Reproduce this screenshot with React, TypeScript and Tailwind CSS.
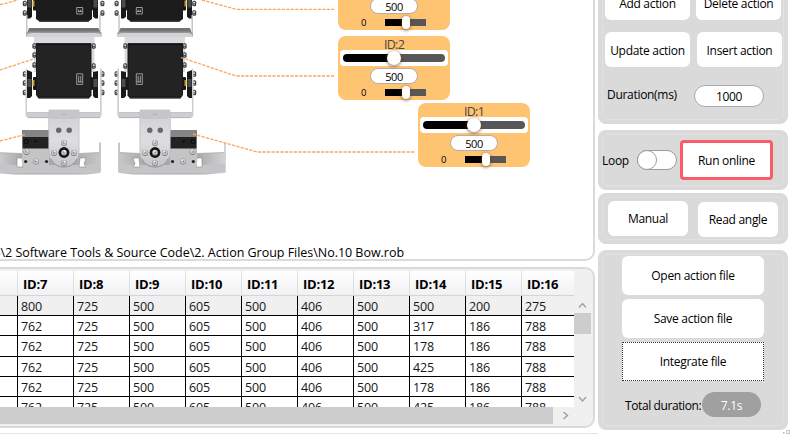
import React from "react";

const columns = [7, 8, 9, 10, 11, 12, 13, 14, 15, 16];

const rows = [
  { h: "h-5", v: [800, 725, 500, 605, 500, 406, 500, 500, 200, 275] },
  { h: "h-5", v: [762, 725, 500, 605, 500, 406, 500, 317, 186, 788] },
  { h: "h-[21px]", v: [762, 725, 500, 605, 500, 406, 500, 178, 186, 788] },
  { h: "h-5", v: [762, 725, 500, 605, 500, 406, 500, 425, 186, 788] },
  { h: "h-5", v: [762, 725, 500, 605, 500, 406, 500, 178, 186, 788] },
  { h: "h-5", v: [762, 725, 500, 605, 500, 406, 500, 425, 186, 788] },
];

function Screw({ x, y, r = 2.6 }: { x: number; y: number; r?: number }) {
  return (
    <g>
      <circle cx={x} cy={y + 0.4} r={r + 0.4} fill="#77797b" />
      <circle cx={x} cy={y} r={r} fill="#c9cacb" />
      <circle cx={x} cy={y} r={r * 0.45} fill="#8d8a84" />
      <circle cx={x - 0.6} cy={y - 0.8} r={0.9} fill="#f4f4f4" />
    </g>
  );
}

function SideScrew({ x, y }: { x: number; y: number }) {
  return (
    <g>
      <rect x={x - 2} y={y - 2.8} width="4" height="5.6" rx="1.6" fill="#3b3b3b" />
      <rect x={x - 1.1} y={y - 1.6} width="2" height="1.5" fill="#dcdcdc" />
      <rect x={x - 0.8} y={y + 0.7} width="1.6" height="1" fill="#a5a5a5" />
    </g>
  );
}

function Horns({ y }: { y: number }) {
  return (
    <g>
      <rect x="126" y={y - 6} width="3" height="13" rx="1" fill="#171717" />
      <path d={`M121 ${y - 12}l5 1v24l-2 2h-3z`} fill="#191919" />
      <rect x="121.5" y={y - 4} width="4" height="8" fill="#4a4b4d" />
      <rect x="182" y={y - 6} width="4" height="13" rx="1" fill="#171717" />
      <rect x="184.5" y={y - 3} width="2" height="6" fill="#c39a32" />
      <path d={`M187 ${y - 11}l5 -2v28h-3l-2 -2z`} fill="#191919" />
      <rect x="187.5" y={y - 4} width="4" height="8" fill="#4a4b4d" />
      {[-9, 0, 9.5].map((d) => (
        <g key={d}>
          <SideScrew x={116.6} y={y + d} />
          <SideScrew x={194.2} y={y + d} />
        </g>
      ))}
    </g>
  );
}

function ServoLabel({ y, h }: { y: number; h: number }) {
  return (
    <g fill="none" stroke="#b6b6b6" strokeWidth="0.8">
      <path d={`M136.3 ${y}h6v${h}h-6z`} />
      <path d={`M138.2 ${y + 2}v${h - 4}M140.3 ${y + 2}v${h - 4}M137 ${y + h - 2.5}h4`} />
    </g>
  );
}

function Leg() {
  return (
    <g>
      <Horns y={3.5} />
      <path d="M127 -4H183V19L179 21.8H131L127 19Z" fill="#1c1c1d" />
      <path d="M130 21.2H180" stroke="#383838" />
      <ServoLabel y={7.5} h={6.5} />

      <path d="M118.3 15H119.8V37H118.3ZM191.5 15H193V37H191.5Z" fill="#c7c7cb" />
      <rect x="124.5" y="36" width="60.5" height="36" fill="#dbdbdf" />
      <path d="M120.5 28H190L192.5 35.5H117.5Z" fill="#747476" />
      <path d="M117.5 32.5L121 31.5H189L192.5 32.5V37H117.5Z" fill="#98989a" />
      <path d="M117.5 34.5Q119 33 123 33H187Q191 33 192.5 35V37H117.5Z" fill="#d3d3d6" />
      {[46, 66].map((y) => (
        <SideScrew key={y} x={125.3} y={y} />
      ))}
      {[46, 55, 65].map((y) => (
        <SideScrew key={y} x={184.6} y={y} />
      ))}

      <Horns y={83} />
      <path d="M127.5 43.5H183V95L180.5 98.5H130L127.5 95.5Z" fill="#1b1b1c" />
      <rect x="129" y="45" width="53" height="51" fill="#232324" />
      <path d="M128 43.8H183" stroke="#070707" />
      <path d="M130 97.8H180" stroke="#343434" />
      <ServoLabel y={73.8} h={10.6} />

      <path d="M117.3 69L119 68V112.5H192V68L193.5 70V114Q193.5 118 190 118H121Q117.3 118 117.3 114Z" fill="#cfcfd3" />
      <path d="M119 112.6H192" stroke="#b9b9bd" strokeWidth="0.8" />
      <path d="M119 117.6H191" stroke="#a9a9ad" strokeWidth="0.7" />

      <path
        d="M118 142L120 143V152.5L140 153.5H197L224 152.5V143L226 142V172Q226 173 224 173L205 174.5H133L119.5 173Q118 173 118 171Z"
        fill="url(#foot)"
      />
      <path d="M119 163.5L133 165H205L225 163.5V172L205 173.5H133L119 172Z" fill="#c5c5c8" />
      <path d="M120 152.5L140 153.5M197 153.5L224 152.5" stroke="#a6a6a9" strokeWidth="0.7" />
      <path d="M133 158H139L140 167H133L135 164ZM197 158H202V167H196Z" fill="#fff" stroke="#8b8b8c" strokeWidth="0.6" />

      <rect x="170" y="130" width="27" height="36" fill="#c4c4c6" />
      <rect x="170" y="130" width="27" height="7.5" fill="#858586" />
      <rect x="170" y="137" width="26.5" height="11.5" fill="#222223" />
      <circle cx="193" cy="141.5" r="2" fill="#292929" stroke="#070707" />
      <circle cx="183.5" cy="141.5" r="1.3" fill="#101010" />
      <Screw x={192.5} y={151.5} />
      <Screw x={183} y={161.2} />
      <circle cx="172.5" cy="161.5" r="1.6" fill="#222" />
      <circle cx="193.3" cy="161.5" r="1.6" fill="#222" />

      <path d="M140 110H170V119H170.3V152A15.2 15.2 0 0 1 139.9 152V119H140Z" fill="url(#plate)" stroke="#b2b2b6" strokeWidth="0.6" />
      <path d="M140.3 110.3H170V117L167 119H143L140.3 117Z" fill="#c6c6ca" />
      <path d="M153 114.5H157" stroke="#a6a6a6" strokeWidth="0.7" />
      <path d="M142 159A14.5 14.5 0 0 0 168 159" fill="none" stroke="#97979b" strokeWidth="1" />
      <circle cx="149.8" cy="130.3" r="2.7" fill="#66676a" />
      <circle cx="160.3" cy="130.3" r="2.7" fill="#66676a" />
      <Screw x={155} y={142.6} />
      <Screw x={145.2} y={152.5} />
      <Screw x={164.8} y={152.5} />
      <Screw x={155} y={162.6} />
      <circle cx="155" cy="152.5" r="5.4" fill="#141414" />
      <Screw x={155} y={152.3} r={2.5} />
    </g>
  );
}

function Robot() {
  return (
    <svg className="block h-[240px] w-[592px]" viewBox="0 0 592 240">
      <defs>
        <linearGradient id="plate" x1="0" y1="0" x2="0" y2="1">
          <stop offset="0" stopColor="#d0d0d3" />
          <stop offset="0.55" stopColor="#dedee1" />
          <stop offset="1" stopColor="#c3c3c6" />
        </linearGradient>
        <linearGradient id="foot" x1="0" y1="0" x2="1" y2="0">
          <stop offset="0" stopColor="#c8c8cb" />
          <stop offset="0.25" stopColor="#a9a9ab" />
          <stop offset="0.72" stopColor="#a6a6a8" />
          <stop offset="1" stopColor="#d5d5d8" />
        </linearGradient>
      </defs>
      <Leg />
      <g transform="translate(219 0) scale(-1 1)">
        <Leg />
      </g>
      <g fill="none" stroke="#fba55c" strokeWidth="1.3" strokeDasharray="3.2 1.3">
        <path d="M0 4.7L18 0M0 70L35 58.5M0 141L26 134.3" />
        <path d="M202 0L236 9.3H334M181 57.5L236 76H334M193 134L257 152H415" />
      </g>
    </svg>
  );
}

function ServoCard({ id, place }: { id: number; place: string }) {
  return (
    <div className={`absolute flex h-16 w-28 flex-col rounded-lg bg-[#ffc472] px-0.5 ${place}`}>
      <div className="mb-[1.5px] h-[12.5px] shrink-0 overflow-hidden pt-px text-center text-[12.5px] leading-[15px] tracking-[-0.7px] text-[#454545]">
        ID:{id}
      </div>
      <div className="flex h-4 shrink-0 items-center rounded bg-white px-[3px]">
        <div className="relative flex h-2 w-full overflow-visible">
          <div className="h-2 w-1/2 rounded-l bg-black" />
          <div className="h-2 w-1/2 rounded-r bg-[#575757]" />
          <div className="absolute -top-[3px] left-[44px] h-3.5 w-3.5 rounded-full bg-white shadow-[0_1px_3px_1px_rgba(100,60,40,0.5)]" />
        </div>
      </div>
      <div className="mx-auto mt-0.5 flex h-4 w-12 shrink-0 items-center justify-center rounded-full border border-[#b4ada8] bg-white pt-px text-[11px] tracking-[-0.4px]">
        500
      </div>
      <div className="flex h-[15px] items-center pt-px">
        <span className="w-[45px] pl-[21px] pt-px text-[9.5px] leading-3">0</span>
        <div className="relative flex">
          <div className="h-[7px] w-[21px] bg-black" />
          <div className="h-[7px] w-5 bg-[#575757]" />
          <div className="absolute -top-[3px] left-[17px] h-[13px] w-2 rounded bg-white shadow-[0_1px_3px_1px_rgba(100,60,40,0.5)]" />
        </div>
      </div>
    </div>
  );
}

function Panel({ className, children }: { className: string; children: React.ReactNode }) {
  return (
    <section className={`w-[190px] shrink-0 rounded-lg bg-[#dadada] p-1 ${className}`}>
      <div className="h-full rounded-md border border-[#e1e1e1]">{children}</div>
    </section>
  );
}

function Button({ className, children }: { className: string; children: React.ReactNode }) {
  return (
    <button className={`flex shrink-0 items-center justify-center whitespace-nowrap bg-white ${className}`}>{children}</button>
  );
}

function ActionTable() {
  return (
    <div className="h-[136px] w-[574px] overflow-hidden tracking-[-0.2px]">
      <div className="flex h-[25px] border-b border-[#d5d5d5] bg-linear-to-b from-white to-[#f0f1f3] text-[13px] font-bold tracking-[-0.25px]">
        <div className="w-[18px] shrink-0 border-r border-[#dfe0e2]" />
        {columns.map((c) => (
          <div key={c} className="flex w-14 shrink-0 items-center border-r border-[#dfe0e2] pl-[5px] pt-px">
            ID:{c}
          </div>
        ))}
      </div>
      {rows.map((row, i) => (
        <div key={i} className={`flex ${row.h} ${i === 0 ? "bg-[#f0f0f0]" : "bg-white"}`}>
          <div className="w-[18px] shrink-0 border-b border-r border-black" />
          {row.v.map((v, j) => (
            <div key={j} className="flex w-14 shrink-0 items-center border-b border-r border-black pl-[3px] pt-0.5 text-[#161616]">
              {v}
            </div>
          ))}
        </div>
      ))}
    </div>
  );
}

export default function App() {
  return (
    <main className="flex h-[434px] w-[790px] overflow-hidden bg-white font-['Open_Sans','Noto_Sans',sans-serif] text-[12.5px] leading-4 text-black">
      <div className="flex w-[598px] shrink-0 flex-col">
        <section className="relative h-[261px] w-[595px] shrink-0 overflow-hidden rounded-br-[10px] border-b-2 border-r-2 border-[#dadada]">
          <Robot />
          <ServoCard id={3} place="left-[338px] -top-[34px]" />
          <ServoCard id={2} place="left-[338px] top-9" />
          <ServoCard id={1} place="left-[418px] top-[103px]" />
          <div className="flex w-[404px] justify-end whitespace-nowrap pt-[5px] tracking-[-0.03px]">
            5\2 Software Tools &amp; Source Code\2. Action Group Files\No.10 Bow.rob
          </div>
        </section>

        <section className="mt-1.5 h-[161px] w-[595px] shrink-0 overflow-hidden rounded-r-[10px] border-y-2 border-r-2 border-[#dadada] bg-[#f0f0f0] pt-0.5">
          <div className="flex">
            <ActionTable />
            <div className="flex h-[136px] w-[17px] flex-col bg-[#f0f0f0] pt-[25px]">
              <svg className="h-[17px] w-[17px]" viewBox="0 0 17 17" fill="none" stroke="#a0a0a0" strokeWidth="1.4">
                <path d="M5 11.5L8.5 7.5L12 11.5" />
              </svg>
              <div className="h-[21px] bg-[#cdcdcd]" />
              <svg className="mt-auto h-[17px] w-[17px]" viewBox="0 0 17 17" fill="none" stroke="#a0a0a0" strokeWidth="1.4">
                <path d="M5 7L8.5 11L12 7" />
              </svg>
            </div>
          </div>
          <div className="flex h-[17px]">
            <div className="w-[553px] bg-[#cdcdcd]" />
            <svg className="ml-1 h-[17px] w-[17px]" viewBox="0 0 17 17" fill="none" stroke="#a0a0a0" strokeWidth="1.4">
              <path d="M6.5 5L10.5 8.5L6.5 12" />
            </svg>
          </div>
        </section>
        <div className="mt-[5px] h-px bg-[#e4e4e4]" />
      </div>

      <aside className="flex w-[192px] shrink-0 flex-col text-[12px] tracking-[-0.3px]">
        <Panel className="-mt-5 h-36">
          <div className="flex gap-1.5 pl-0.5">
            <Button className="h-[35px] w-[85px] rounded-md pt-0.5">Add action</Button>
            <Button className="h-[35px] w-[85px] rounded-md pt-0.5">Delete action</Button>
          </div>
          <div className="mt-3 flex gap-[7px] pl-0.5">
            <Button className="h-[35px] w-[85px] rounded-md pt-0.5">Update action</Button>
            <Button className="h-[35px] w-[85px] rounded-md pt-0.5">Insert action</Button>
          </div>
          <div className="mt-[18px] flex pl-1">
            <span className="w-[87px] pt-0.5">Duration(ms)</span>
            <div className="flex h-[22px] w-[70px] items-center justify-center rounded-full border border-[#a9aaad] bg-white pt-px">1000</div>
          </div>
        </Panel>

        <Panel className="mt-1.5 h-[60px]">
          <div className="flex h-full items-center">
            <span className="-ml-px w-[35px] pt-0.5">Loop</span>
            <div className="h-5 w-10 rounded-full border border-[#9b9b9b] bg-white">
              <div className="-ml-px -mt-px h-5 w-5 rounded-full border border-[#9b9b9b] bg-white" />
            </div>
            <Button className="ml-[3px] h-10 w-[93px] rounded border-[3px] border-[#fd5a69] pt-0.5">Run online</Button>
          </div>
        </Panel>

        <Panel className="mt-[3px] h-[51px]">
          <div className="flex gap-2.5 pl-[5px] pt-[3px]">
            <Button className="h-[35px] w-20 rounded-md pt-px">Manual</Button>
            <Button className="mt-px h-[35px] w-20 rounded-md pt-px">Read angle</Button>
          </div>
        </Panel>

        <Panel className="mt-1.5 h-[180px]">
          <div className="flex flex-col gap-1 pl-[19px] pt-px">
            <Button className="h-[39px] w-[142px] rounded-md pt-px">Open action file</Button>
            <Button className="h-[39px] w-[142px] rounded-md pt-px">Save action file</Button>
            <Button className="h-[39px] w-[142px] border border-dotted border-[#333] pt-px">Integrate file</Button>
          </div>
          <div className="mt-[11px] flex items-center pl-[22px]">
            <span className="w-[77px] whitespace-nowrap pt-0.5 tracking-[-0.4px]">Total duration:</span>
            <div className="flex h-[25px] w-[59px] items-center justify-center rounded-full bg-[#a0a0a0] pt-0.5 text-white">7.1s</div>
          </div>
        </Panel>
        <svg className="ml-auto h-1 w-2.5 shrink-0" viewBox="0 0 10 4" fill="#a9b5c8">
          <path d="M3 2h1.5v1.5H3zM6 0h1.5v1.5H6zM6 2.5h1.5V4H6zM8.5 0H10v1.5H8.5zM8.5 2.5H10V4H8.5z" />
        </svg>
      </aside>
    </main>
  );
}
